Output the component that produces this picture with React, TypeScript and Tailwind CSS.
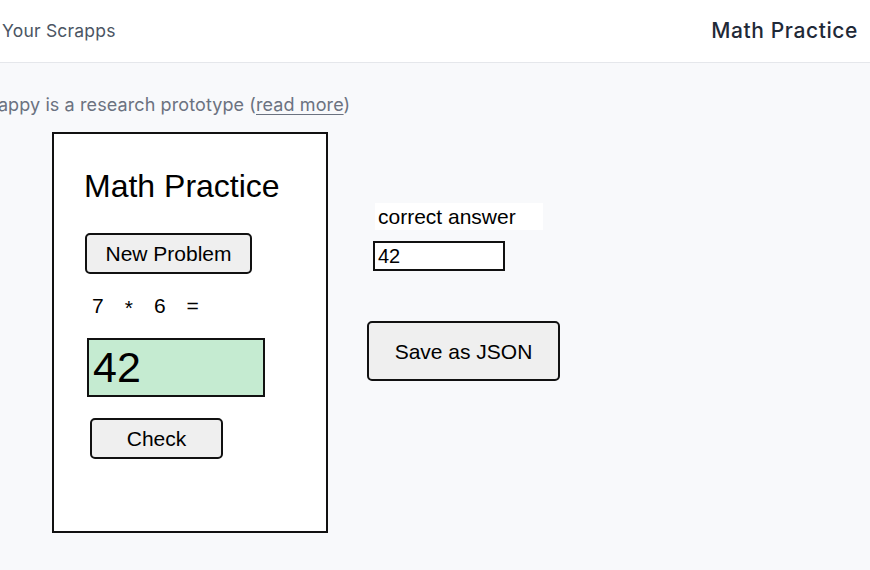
import React from "react";

const canvasFont = { fontFamily: '"Liberation Sans", Arial, sans-serif' };

function CanvasButton({ label, className }: { label: string; className: string }) {
  return (
    <button
      type="button"
      className={`flex items-center justify-center rounded-[5px] border-2 border-[#111] bg-[#efefef] text-[21px] leading-none text-black ${className}`}
    >
      {label}
    </button>
  );
}

export default function App() {
  return (
    <div className="h-[570px] w-[870px] overflow-hidden bg-[#f8f9fb] font-['Inter',sans-serif]">
      <header className="flex h-[63px] items-center justify-between border-b border-[#e5e7eb] bg-white pl-[2px] pr-[12px]">
        <span className="text-[17.5px] tracking-[0.2px] text-[#4b5563]">Your Scrapps</span>
        <span className="text-[21px] font-medium tracking-[0.6px] text-[#1f2937]">Math Practice</span>
      </header>

      <main className="relative h-[507px]">
        <p className="ml-[-31px] pt-[28px] text-[18px] tracking-[0.1px] text-[#6b7280]">
          Scrappy is a research prototype (<span className="underline underline-offset-[3px]">read more</span>)
        </p>

        {/* free canvas: objects sit where the user dropped them */}
        <div style={canvasFont} className="text-black">
          <div className="absolute left-[52px] top-[69px] flex h-[401px] w-[276px] flex-col items-start border-2 border-[#111] bg-white pt-[36px]">
            <div className="ml-[30px] text-[32px] leading-none">Math Practice</div>

            <CanvasButton label="New Problem" className="ml-[31px] mt-[31px] h-[41px] w-[167px]" />

            <div className="ml-[38px] mt-[21px] flex items-baseline gap-[21px] text-[21px] leading-none">
              <span>7</span>
              <span className="translate-y-[2px]">*</span>
              <span>6</span>
              <span>=</span>
            </div>

            <div className="ml-[33px] mt-[22px] flex h-[59px] w-[178px] items-center border-2 border-[#111] bg-[#c5ebd1] pl-[4px] text-[43px] leading-none">
              42
            </div>

            <CanvasButton label="Check" className="ml-[36px] mt-[21px] h-[41px] w-[133px]" />
          </div>

          <div className="absolute left-[367px] top-[140px] flex flex-col items-start">
            <div className="ml-[8px] flex h-[27px] w-[168px] items-center bg-white pl-[3px] text-[21px] leading-none">
              correct answer
            </div>
            <div className="ml-[6px] mt-[11px] flex h-[30px] w-[132px] items-center border-2 border-[#111] bg-white pl-[3px] text-[20px] leading-none">
              42
            </div>
            <CanvasButton label="Save as JSON" className="mt-[50px] h-[60px] w-[193px]" />
          </div>
        </div>
      </main>
    </div>
  );
}
